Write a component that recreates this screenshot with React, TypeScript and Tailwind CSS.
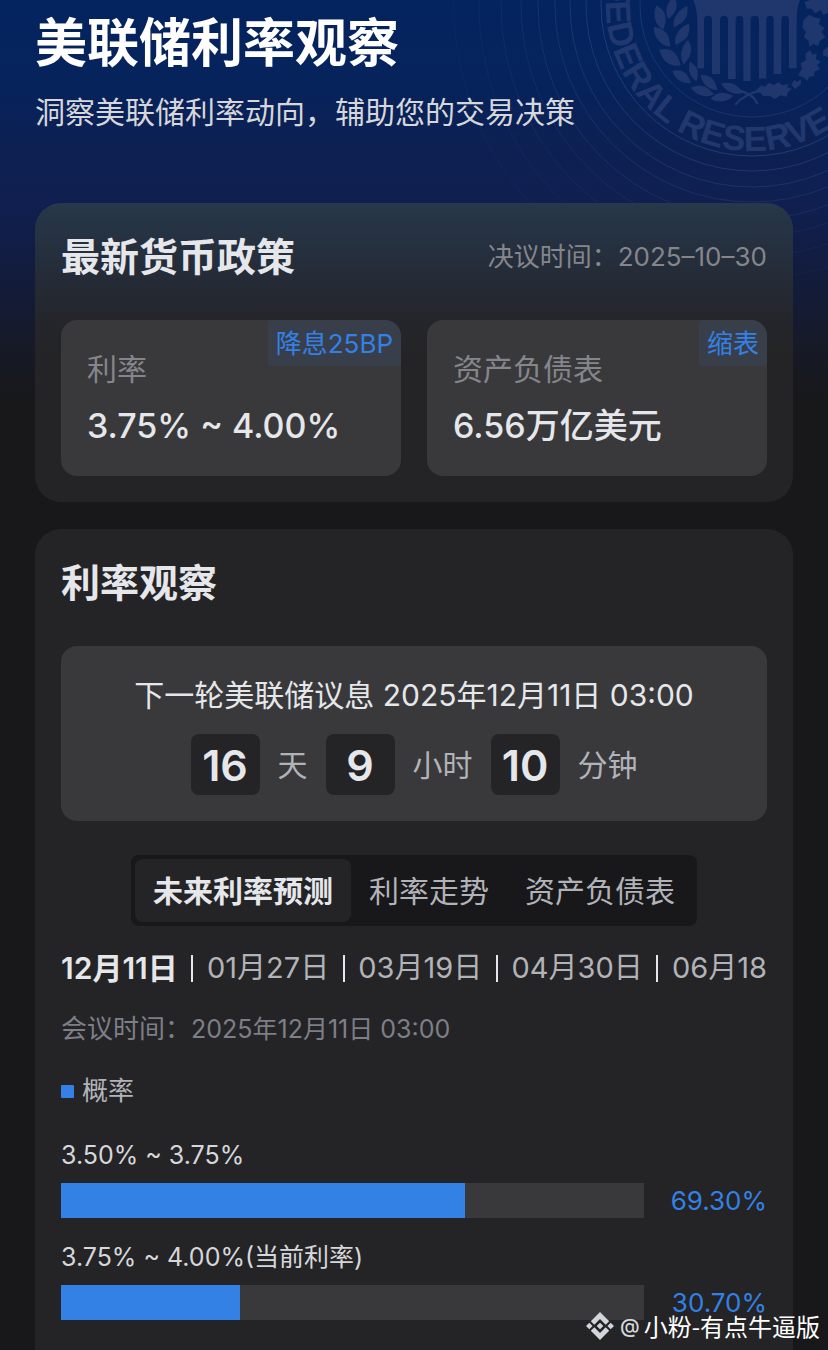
import { useState } from "react";

const RINGS = [
  { r: 112, o: 0.5 },
  { r: 151, o: 0.7 },
  { r: 166, o: 0.6 },
  { r: 182, o: 0.5 },
  { r: 197, o: 0.45 },
  { r: 214, o: 0.4 },
  { r: 231, o: 0.3 },
  { r: 251, o: 0.25 },
  { r: 273, o: 0.2 },
  { r: 298, o: 0.15 },
];

// x, y, half length, half width, rotation
const LEAVES = [
  [36, 52, 38, 15, 74],
  [70, 24, 34, 13, 105],
  [98, 50, 38, 13, 122],
  [42, 110, 39, 15, 50],
  [103, 103, 38, 14, 122],
  [66, 172, 40, 17, 36],
  [114, 156, 37, 13, 100],
  [101, 230, 33, 13, 32],
  [136, 214, 31, 11, 72],
  [183, 247, 34, 13, 42],
  [163, 273, 36, 13, 16],
  [252, 265, 36, 12, 22],
  [221, 292, 34, 12, -8],
];

const STRIPES = [
  [148, 168, 205],
  [192, 216, 222],
  [240, 263, 237],
  [286, 308, 243],
  [333, 355, 236],
  [377, 400, 222],
  [423, 446, 205],
];

function Seal() {
  return (
    <svg
      className="absolute right-0 top-0 h-[400px] w-[400px]"
      viewBox="428 0 400 400"
      aria-hidden="true"
    >
      <defs>
        <path id="sealArc" d="M608.7 -22.9 A146 146 0 1 0 898 5" />
        <linearGradient id="ringFade" x1="0" y1="0" x2="0" y2="1">
          <stop offset="0" stopColor="#fff" />
          <stop offset="0.45" stopColor="#fff" />
          <stop offset="0.95" stopColor="#000" />
        </linearGradient>
        <mask id="ringMask" maskUnits="userSpaceOnUse" x="428" y="0" width="400" height="400">
          <rect x="428" y="0" width="400" height="400" fill="url(#ringFade)" />
        </mask>
      </defs>
      <g fill="none" stroke="#274a86" strokeWidth="1" mask="url(#ringMask)">
        {RINGS.map(({ r, o }) => (
          <circle key={r} cx="752" cy="5" r={r} opacity={o} />
        ))}
      </g>
      <text
        fill="#20386d"
        fontFamily="'Liberation Sans', sans-serif"
        fontWeight="700"
        fontSize="35"
      >
        <textPath href="#sealArc" startOffset="3">FEDERAL RESERVE</textPath>
      </text>
      <g transform="translate(648 0) scale(0.3333)" fill="#1f376d">
        {LEAVES.map(([x, y, a, b, deg]) => (
          <path
            key={`${x}-${y}`}
            d={`M${-a} 0 Q${-a * 0.3} ${-b * 1.7} ${a * 0.4} ${-b * 0.9} Q${a * 0.8} ${-b * 0.4} ${a} 0 Q${a * 0.8} ${b * 0.7} ${a * 0.3} ${b} Q${-a * 0.4} ${b * 1.3} ${-a} 0Z`}
            transform={`translate(${x} ${y}) rotate(${deg})`}
          />
        ))}
        <path d="M136 0H456Q446 22 446 60H423Q423 47 411 47Q400 47 400 60H377Q377 47 366 47Q355 47 355 60H333Q333 47 321 47Q308 47 308 60H286Q286 47 275 47Q263 47 263 60H240Q240 47 228 47Q216 47 216 60H192Q192 47 180 47Q168 47 168 60H148Q146 22 136 0Z" />
        {STRIPES.map(([x1, x2, y]) => (
          <path key={x1} d={`M${x1} 58H${x2}V${y}H${x1}Z`} />
        ))}
        <path d="M320 275L338 257L352 260L362 248L378 255L392 246L402 256L420 252L418 263L432 266L420 276L416 290L398 286L380 297L366 287L346 289L338 279Z" />
        <path d="M430 254L438 240L448 246L458 238L460 252L448 262L442 268Z" />
        <path d="M450 226L462 206L458 190L474 180L472 162L486 150L494 164L506 160L504 178L518 184L508 196L516 208L500 214L498 228L484 230L478 242L466 232Z" />
        <path d="M466 60L484 44L498 52L518 56L512 72L530 84L520 96L532 112L516 122L510 138L496 132L484 140L482 122L468 112L474 96L464 84Z" />
        <path d="M470 6L486 0H540V38L526 44L518 30L502 40L490 26L476 26Z" />
        <path d="M526 150L540 140V172L524 166Z" />
        <path
          d="M262 314Q284 286 340 270M264 270Q318 280 328 312"
          fill="none"
          stroke="#1f376d"
          strokeWidth="7"
        />
      </g>
    </svg>
  );
}

const POLICIES = [
  { label: "利率", value: "3.75% ~ 4.00%", tag: "降息25BP" },
  { label: "资产负债表", value: "6.56万亿美元", tag: "缩表" },
];

const COUNTDOWN = [
  { value: "16", unit: "天" },
  { value: "9", unit: "小时" },
  { value: "10", unit: "分钟" },
];

const TABS = ["未来利率预测", "利率走势", "资产负债表"];
const DATES = ["12月11日", "01月27日", "03月19日", "04月30日", "06月18"];

const FORECAST = [
  { range: "3.50% ~ 3.75%", percent: 69.3 },
  { range: "3.75% ~ 4.00%(当前利率)", percent: 30.7 },
];

export default function App() {
  const [tab, setTab] = useState(0);
  const [date, setDate] = useState(0);

  return (
    <div className="relative flex min-h-screen flex-col overflow-hidden bg-[#18181a] bg-[linear-gradient(180deg,#04245f_0px,#06235c_80px,#0d2052_150px,#101f50_205px,#121c3e_270px,#161a29_340px,#18181a_400px)] font-['Inter','Noto_Sans_CJK_SC',sans-serif] text-[#e6e7ea]">
      <Seal />
      <main className="relative flex grow flex-col px-[35px]">
        <header className="pt-[14px]">
          <h1 className="text-[52px] font-bold leading-[60px] text-white">美联储利率观察</h1>
          <p className="mt-[18px] text-[30px] leading-10 text-[#d6d7da]">
            洞察美联储利率动向，辅助您的交易决策
          </p>
        </header>

        <section className="mt-[71px] rounded-[26px] bg-[#242426] bg-[linear-gradient(180deg,#26384a_0px,#252e3c_55px,#24262c_115px,#242426_150px)] px-[26px] pb-[26px] pt-[30px]">
          <div className="flex items-center justify-between">
            <h2 className="text-[39px] font-semibold leading-[48px]">最新货币政策</h2>
            <p className="text-[26px] leading-9 text-[#85868c]">决议时间：2025–10–30</p>
          </div>
          <div className="mt-[39px] grid grid-cols-2 gap-[26px]">
            {POLICIES.map((p) => (
              <div
                key={p.label}
                className="relative overflow-hidden rounded-2xl bg-[#39393b] px-[26px] pb-[26px] pt-[29px]"
              >
                <span className="absolute right-0 top-0 rounded-sm bg-[#383f4a] px-2 pb-1 pt-1.5 text-[26px] leading-9 text-[#3381e5]">
                  {p.tag}
                </span>
                <p className="text-[30px] leading-10 text-[#85868c]">{p.label}</p>
                <p className="mt-[13px] text-[34px] font-medium leading-[48px]">{p.value}</p>
              </div>
            ))}
          </div>
        </section>

        <section className="mt-[27px] grow rounded-t-[26px] bg-[#242426] px-[26px] pb-[30px] pt-[30px]">
          <h2 className="text-[39px] font-semibold leading-[48px]">利率观察</h2>

          <div className="mt-[39px] rounded-2xl bg-[#39393b] pb-[26px] pt-[29px]">
            <p className="text-center text-[30px] leading-10">
              下一轮美联储议息 2025年12月11日 03:00
            </p>
            <div className="mt-[19px] flex items-center justify-center gap-[18px]">
              {COUNTDOWN.map((c) => (
                <div key={c.unit} className="flex items-center gap-[18px]">
                  <span className="h-[61px] w-[69px] rounded-lg bg-[#242426] text-center text-[43px] font-semibold leading-[63px]">
                    {c.value}
                  </span>
                  <span className="text-[30px] leading-10 text-[#b2b3b8]">{c.unit}</span>
                </div>
              ))}
            </div>
          </div>

          <div className="mt-[34px] flex justify-center">
            <div role="tablist" className="flex rounded-lg bg-[#18181a] p-1">
              {TABS.map((t, i) => (
                <button
                  key={t}
                  type="button"
                  role="tab"
                  aria-selected={i === tab}
                  onClick={() => setTab(i)}
                  className={
                    i === tab
                      ? "h-[63px] rounded-lg bg-[#242426] px-[18px] text-[30px] font-bold leading-10"
                      : "h-[63px] rounded-lg px-[18px] text-[30px] leading-10 text-[#b2b3b8]"
                  }
                >
                  {t}
                </button>
              ))}
            </div>
          </div>

          <div className="mt-[22px] flex items-center justify-between">
            {DATES.map((d, i) => (
              <div key={d} className="contents">
                {i > 0 && <span className="h-[27px] w-0.5 bg-[#e6e7ea]" />}
                <button
                  type="button"
                  onClick={() => setDate(i)}
                  className={
                    i === date
                      ? "whitespace-nowrap text-[30px] font-semibold leading-10"
                      : "whitespace-nowrap text-[29px] leading-10 text-[#b2b3b8]"
                  }
                >
                  {d}
                </button>
              </div>
            ))}
          </div>

          <p className="mt-[23px] text-[26px] leading-9 text-[#7d7f87]">
            会议时间：<span className="text-[25px]">2025年12月11日 03:00</span>
          </p>

          <div className="mt-[26px] flex items-center gap-2 text-[26px] leading-9 text-[#b2b3b8]">
            <span className="h-[13px] w-[13px] rounded-[1px] bg-[#3381e5]" />
            概率
          </div>

          <ul className="mt-7 flex flex-col gap-[21px]">
            {FORECAST.map((f) => (
              <li key={f.range}>
                <p className="text-[25px] leading-9 text-[#d6d7da]">{f.range}</p>
                <div className="mt-[10px] flex items-center">
                  <div className="h-[35px] flex-1 bg-[#39393b]">
                    <div className="h-full bg-[#3381e5]" style={{ width: `${f.percent}%` }} />
                  </div>
                  <span className="w-[123px] text-right text-[26px] leading-[35px] text-[#3381e5]">
                    {f.percent.toFixed(2)}%
                  </span>
                </div>
              </li>
            ))}
          </ul>
        </section>
      </main>

      <div className="absolute bottom-2 right-2 flex items-center text-[24px] leading-8 text-white">
        <svg className="mr-1.5 h-7 w-7" viewBox="0 0 28 28" fill="#d3d5da" aria-hidden="true">
          <path d="M14 0L23.2 9.2L19.7 12.7L14 7L8.3 12.7L4.8 9.2Z" />
          <path d="M14 28L4.8 18.8L8.3 15.3L14 21L19.7 15.3L23.2 18.8Z" />
          <path d="M3.3 10.7L6.6 14L3.3 17.3L0 14ZM14 10.7L17.3 14L14 17.3L10.7 14ZM24.7 10.7L28 14L24.7 17.3L21.4 14Z" />
        </svg>
        <span className="mr-1 text-[20px] font-medium text-[#d3d5da]">@</span>
        <span className="font-['Noto_Sans_CJK_SC',sans-serif]">小粉-有点牛逼版</span>
      </div>
    </div>
  );
}
